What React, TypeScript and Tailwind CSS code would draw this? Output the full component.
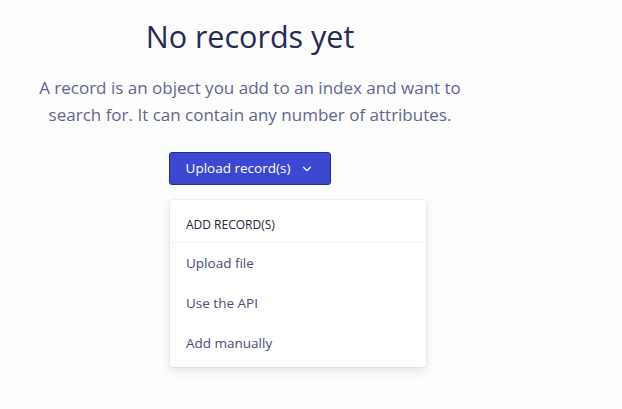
import { ChevronDown } from "lucide-react";

const ITEMS = ["Upload file", "Use the API", "Add manually"];

export default function App() {
  return (
    <main
      className="min-h-[409px] bg-[#fdfdfe] overflow-hidden"
      style={{ fontFamily: '"Open Sans", "Noto Sans", sans-serif' }}
    >
      <div className="w-[500px] flex flex-col items-center pt-[14px]">
        <h1 className="text-[30.5px] leading-[44px] text-[#262a55]">
          No records yet
        </h1>
        <p className="mt-[16px] text-[17px] leading-[27px] text-[#62658f] text-center w-[440px]">
          A record is an object you add to an index and want to search for. It
          can contain any number of attributes.
        </p>

        <div className="relative mt-[24px]">
          <button
            type="button"
            className="h-[33px] w-[162px] flex items-center justify-center gap-[10px] rounded-[3px] border border-[#24308f] bg-[#3c48d2] text-white text-[13.5px] font-medium"
          >
            Upload record(s)
            <ChevronDown className="w-[14px] h-[14px]" strokeWidth={2} />
          </button>

          {/* Dropdown menu */}
          <div className="absolute left-[1px] top-[48px] w-[256px] bg-white rounded-[3px] shadow-[0_4px_10px_rgba(35,38,59,0.12),0_0_0_1px_rgba(35,38,59,0.04)] pb-[4px]">
            <div className="h-[43px] flex items-center pt-[7px] px-[14px] mx-[2px] text-[12px] font-medium text-[#23263b] border-b border-[#f1f1f6]">
              ADD RECORD(S)
            </div>
            {ITEMS.map((item) => (
              <div
                key={item}
                className="h-[40px] flex items-center px-[16px] text-[13.5px] text-[#484c7a]"
              >
                {item}
              </div>
            ))}
          </div>
        </div>
      </div>
    </main>
  );
}
